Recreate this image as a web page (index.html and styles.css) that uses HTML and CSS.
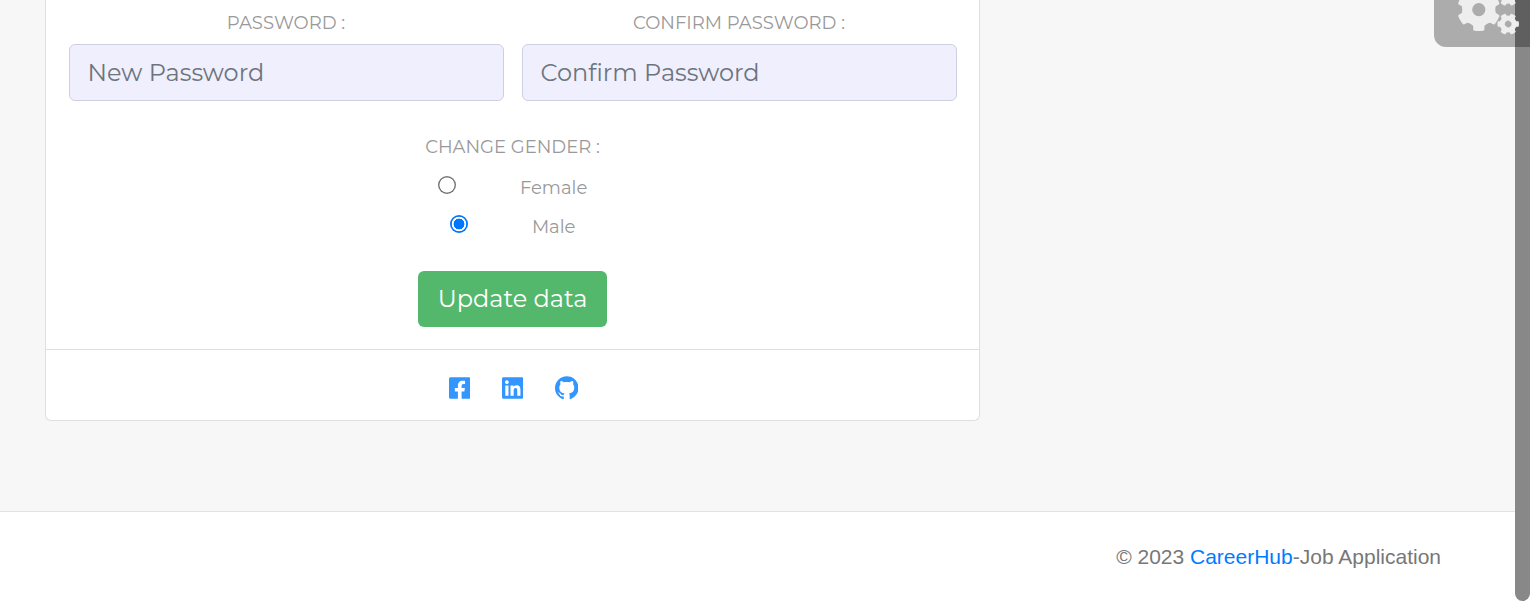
FILE: index.html
```html
<!DOCTYPE html>
<html lang="en">
<head>
<meta charset="utf-8">
<title>CareerHub</title>
<link rel="stylesheet" href="styles.css">
</head>
<body>
<main class="content">
  <form class="card">
    <div class="card-body">
      <div class="fields">
        <div class="field">
          <label class="label" for="pw">PASSWORD :</label>
          <input class="input" id="pw" type="password" placeholder="New Password">
        </div>
        <div class="field">
          <label class="label" for="cpw">CONFIRM PASSWORD :</label>
          <input class="input" id="cpw" type="password" placeholder="Confirm Password">
        </div>
      </div>
      <div class="label label-gender">CHANGE GENDER :</div>
      <label class="option option-female"><input class="radio" type="radio" name="gender"><span>Female</span></label>
      <label class="option option-male"><input class="radio" type="radio" name="gender" checked><span>Male</span></label>
      <button class="button" type="button">Update data</button>
    </div>
    <div class="card-footer">
      <svg class="square" viewBox="0 32 448 448"><path d="M416 32H32A32 32 0 0 0 0 64v384a32 32 0 0 0 32 32h153.25V327.69h-63V256h63v-54.64c0-62.15 37-96.48 93.67-96.48 27.14 0 55.52 4.84 55.52 4.84v61h-31.27c-30.81 0-40.42 19.12-40.42 38.73V256h68.78l-11 71.69h-57.78V480H416a32 32 0 0 0 32-32V64a32 32 0 0 0-32-32z"/></svg>
      <svg class="square" viewBox="0 32 448 448"><path d="M416 32H31.9C14.3 32 0 46.5 0 64.3v383.4C0 465.5 14.3 480 31.9 480H416c17.6 0 32-14.5 32-32.3V64.3c0-17.8-14.4-32.3-32-32.3zM135.4 416H69V202.2h66.5V416zm-33.2-243c-21.3 0-38.5-17.3-38.5-38.5S80.9 96 102.2 96c21.2 0 38.5 17.3 38.5 38.5 0 21.3-17.2 38.5-38.5 38.5zm282.1 243h-66.4V312c0-24.8-.5-56.7-34.5-56.7-34.6 0-39.9 27-39.9 54.9V416h-66.4V202.2h63.7v29.2h.9c8.9-16.8 30.6-34.5 62.9-34.5 67.2 0 79.7 44.3 79.7 101.9V416z"/></svg>
      <svg class="github" viewBox="0 0 16 16"><path d="M8 0C3.58 0 0 3.58 0 8c0 3.54 2.29 6.53 5.47 7.59.4.07.55-.17.55-.38 0-.19-.01-.82-.01-1.49-2.01.37-2.53-.49-2.69-.94-.09-.23-.48-.94-.82-1.13-.28-.15-.68-.52-.01-.53.63-.01 1.08.58 1.23.82.72 1.21 1.87.87 2.33.66.07-.52.28-.87.51-1.07-1.78-.2-3.64-.89-3.64-3.95 0-.87.31-1.59.82-2.15-.08-.2-.36-1.02.08-2.12 0 0 .67-.21 2.2.82.64-.18 1.32-.27 2-.27s1.36.09 2 .27c1.53-1.04 2.2-.82 2.2-.82.44 1.1.16 1.92.08 2.12.51.56.82 1.27.82 2.15 0 3.07-1.87 3.75-3.65 3.95.29.25.54.73.54 1.48 0 1.07-.01 1.93-.01 2.2 0 .21.15.46.55.38A8.01 8.01 0 0 0 16 8c0-4.42-3.58-8-8-8z"/></svg>
    </div>
  </form>
</main>
<footer class="footer"><span>© 2023 <a class="brand" href="#">CareerHub</a>-Job Application</span></footer>
<div class="scrollbar"></div>
<div class="settings">
  <svg class="gears" viewBox="0 0 96 47">
    <defs>
      <path id="tooth" d="M-8-14L-5.6-16.4V-19.8Q-5.4-21 -4.2-21.2Q0-21.8 4.2-21.2Q5.4-21 5.6-19.8V-16.4L8-14z"/>
      <g id="gear">
        <circle r="11.6" fill="none" stroke="#eee" stroke-width="10"/>
        <use href="#tooth"/><use href="#tooth" transform="rotate(60)"/><use href="#tooth" transform="rotate(120)"/><use href="#tooth" transform="rotate(180)"/><use href="#tooth" transform="rotate(240)"/><use href="#tooth" transform="rotate(300)"/>
      </g>
    </defs>
    <use href="#gear" transform="translate(44.8 9.6)"/>
    <use href="#gear" transform="translate(74.2 24) rotate(30) scale(.5)"/>
    <use href="#gear" transform="translate(74.2 -4.7) rotate(30) scale(.5)"/>
  </svg>
</div>
</body>
</html>
```
FILE: styles.css
```css
* { box-sizing: border-box; }
body {
  margin: 0;
  height: 601px;
  overflow: hidden;
  display: flex;
  flex-direction: column;
  background: #f7f7f7;
  color: #999;
  font-family: Montserrat, Inter, sans-serif;
}
.content { height: 511px; padding-left: 45px; }
.card {
  width: 935px;
  height: 421px;
  background: #fff;
  border: 1px solid #dfdfdf;
  border-top: 0;
  border-radius: 0 0 6px 6px;
}
.card-body {
  height: 349px;
  padding: 11px 22px 0 23px;
  display: flex;
  flex-direction: column;
  align-items: center;
}
.fields { width: 100%; display: grid; grid-template-columns: 435px 435px; gap: 18px; }
.field { display: flex; flex-direction: column; align-items: center; }
.label { height: 24px; padding-right: 1px; font-size: 18px; line-height: 24px; white-space: nowrap; }
.input {
  width: 435px;
  height: 57px;
  margin-top: 9px;
  padding: 0 17.5px;
  border: 1px solid #cdd0e0;
  border-radius: 6px;
  background: #f0effe;
  font: 24px Montserrat, Inter, sans-serif;
}
.input::placeholder { color: #6c757d; opacity: 1; }
.label-gender { margin: 34px 0 0; }
.option { display: flex; height: 39px; align-items: center; margin-right: 1px; font-size: 18px; }
.option span { padding-top: 4px; }
.option-female { width: 150px; margin-top: 7px; }
.option-male { width: 126px; }
.radio {
  appearance: none;
  width: 18px;
  height: 18px;
  margin: 0 64.4px 2px 0;
  flex: none;
  border: 1.5px solid #767676;
  border-width: 0;
  border-radius: 50%;
  background: radial-gradient(circle, transparent 7.1px, #767676 7.9px);
}
.radio:checked { background: radial-gradient(circle, #0075ff 5.1px, transparent 5.7px 6.9px, #0075ff 7.6px); }
.button {
  width: 189px;
  height: 56px;
  margin: 27px 1px 0 0;
  padding: 0 0 2px;
  border: 0;
  border-radius: 6px;
  background: #54b86c;
  color: #fff;
  font: 24px Montserrat, Inter, sans-serif;
}
.card-footer {
  height: 71px;
  padding: 5px 0 0 2px;
  border-top: 1px solid #dfdfdf;
  display: flex;
  align-items: center;
  justify-content: center;
  gap: 31.4px;
  fill: #3395ff;
}
.square { width: 21.5px; height: 22px; }
.github { width: 23.5px; height: 24px; }
.footer {
  height: 90px;
  padding-right: 89px;
  background: #fff;
  border-top: 1px solid #e2e2e2;
  display: flex;
  align-items: center;
  justify-content: flex-end;
  font: 21px "Liberation Sans", sans-serif;
  color: #777;
}
.brand { color: #007bff; text-decoration: none; }
.scrollbar {
  position: absolute;
  right: 0;
  top: 0;
  width: 15px;
  height: 601px;
  background: #888;
  border-radius: 0 0 8px 8px;
}
.settings {
  position: absolute;
  right: 0;
  top: 0;
  width: 96px;
  height: 47px;
  background: rgba(0, 0, 0, .3);
  border-radius: 0 0 0 12px;
  overflow: hidden;
}
.gears { display: block; width: 96px; height: 47px; fill: #eee; }
```
